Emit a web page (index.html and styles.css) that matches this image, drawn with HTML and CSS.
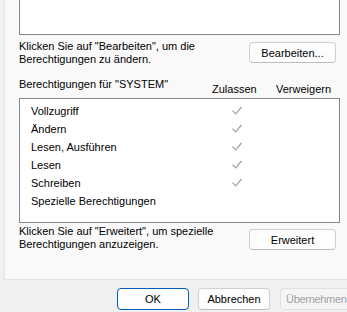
FILE: index.html
```html
<!DOCTYPE html>
<html lang="de">
<head>
<meta charset="utf-8">
<title>Sicherheit</title>
<link rel="stylesheet" href="styles.css">
</head>
<body>
<div class="panel">
  <div class="listbox listbox-top"></div>
  <div class="action">
    <p class="hint">Klicken Sie auf "Bearbeiten", um die<br>Berechtigungen zu ändern.</p>
    <button class="btn btn-side">Bearbeiten...</button>
  </div>
  <div class="perm-head">
    <span class="perm-title">Berechtigungen für "SYSTEM"</span>
    <span class="col-head col-allow">Zulassen</span>
    <span class="col-head col-deny">Verweigern</span>
  </div>
  <div class="listbox perm-list">
    <div class="row"><span class="name">Vollzugriff</span><span class="cell"><svg class="check" viewBox="0 0 10 9"><path d="M0.5 4.6 L3.7 7.9 L9.5 1"/></svg></span></div>
    <div class="row"><span class="name">Ändern</span><span class="cell"><svg class="check" viewBox="0 0 10 9"><path d="M0.5 4.6 L3.7 7.9 L9.5 1"/></svg></span></div>
    <div class="row"><span class="name">Lesen, Ausführen</span><span class="cell"><svg class="check" viewBox="0 0 10 9"><path d="M0.5 4.6 L3.7 7.9 L9.5 1"/></svg></span></div>
    <div class="row"><span class="name">Lesen</span><span class="cell"><svg class="check" viewBox="0 0 10 9"><path d="M0.5 4.6 L3.7 7.9 L9.5 1"/></svg></span></div>
    <div class="row"><span class="name">Schreiben</span><span class="cell"><svg class="check" viewBox="0 0 10 9"><path d="M0.5 4.6 L3.7 7.9 L9.5 1"/></svg></span></div>
    <div class="row"><span class="name">Spezielle Berechtigungen</span><span class="cell"></span></div>
  </div>
  <div class="action action-2">
    <p class="hint">Klicken Sie auf "Erweitert", um spezielle<br>Berechtigungen anzuzeigen.</p>
    <button class="btn btn-side">Erweitert</button>
  </div>
</div>
<div class="footer">
  <button class="btn btn-foot btn-default">OK</button>
  <button class="btn btn-foot">Abbrechen</button>
  <button class="btn btn-foot btn-disabled" disabled>Übernehmen</button>
</div>
</body>
</html>
```

FILE: styles.css
```css
html, body {
  margin: 0;
  padding: 0;
}
body {
  background: #f0f0f0;
  font-family: "Liberation Sans", Arial, sans-serif;
  font-size: 11px;
  color: #000;
  width: 347px;
  height: 312px;
  overflow: hidden;
}
.panel {
  margin-left: 4px;
  width: 360px;
  height: 280px;
  box-sizing: border-box;
  background: #f9f9f9;
  border-left: 1px solid #e3e3e3;
  border-bottom: 1px solid #e3e3e3;
  padding: 0 0 0 14px;
}
.listbox {
  width: 321px;
  box-sizing: border-box;
  background: #fff;
  border: 1px solid #828790;
}
.listbox-top {
  height: 35px;
  border-top: none;
}
.action {
  width: 321px;
  display: flex;
  justify-content: space-between;
  align-items: flex-start;
  margin-top: 5px;
}
.hint {
  margin: 0;
  line-height: 13px;
}
.btn {
  font-family: inherit;
  font-size: 11px;
  color: #000;
  background: #fdfdfd;
  border: 1px solid #d0d0d0;
  border-bottom-color: #bcbcbc;
  border-radius: 4px;
  box-sizing: border-box;
  padding: 0;
  margin: 0;
}
.btn-side {
  width: 87px;
  height: 21px;
  margin-top: 2px;
  margin-right: 4px;
}
.perm-head {
  width: 321px;
  height: 20px;
  margin-top: 12px;
  display: flex;
  align-items: flex-start;
}
.perm-title {
  flex: 1;
  line-height: 13px;
}
.col-head {
  line-height: 13px;
  margin-top: 5px;
}
.col-allow {
  width: 64px;
}
.col-deny {
  width: 64px;
}
.perm-list {
  height: 125px;
  padding: 3px 0 0 11px;
}
.row {
  display: flex;
  align-items: center;
  height: 18px;
  line-height: 18px;
}
.name {
  flex: 0 0 201px;
}
.cell {
  width: 10px;
  height: 18px;
  display: flex;
  align-items: center;
}
.check {
  width: 10px;
  height: 9px;
  margin-top: -1px;
  fill: none;
  stroke: #a3a3a3;
  stroke-width: 1.3;
}
.action-2 {
  margin-top: 2px;
}
.action-2 .btn-side {
  margin-top: 4px;
}
.footer {
  display: flex;
  gap: 9px;
  padding: 8px 0 0 117px;
}
.btn-foot {
  flex: 0 0 auto;
  width: 72px;
  height: 22px;
}
.btn-default {
  border: 1px solid #005fb8;
}
.btn-disabled {
  color: #a0a0a0;
  background: #f5f5f5;
  border-color: #e0e0e0;
  margin-left: 1px;
  letter-spacing: -0.3px;
  text-align: left;
  padding-left: 5px;
}
```
